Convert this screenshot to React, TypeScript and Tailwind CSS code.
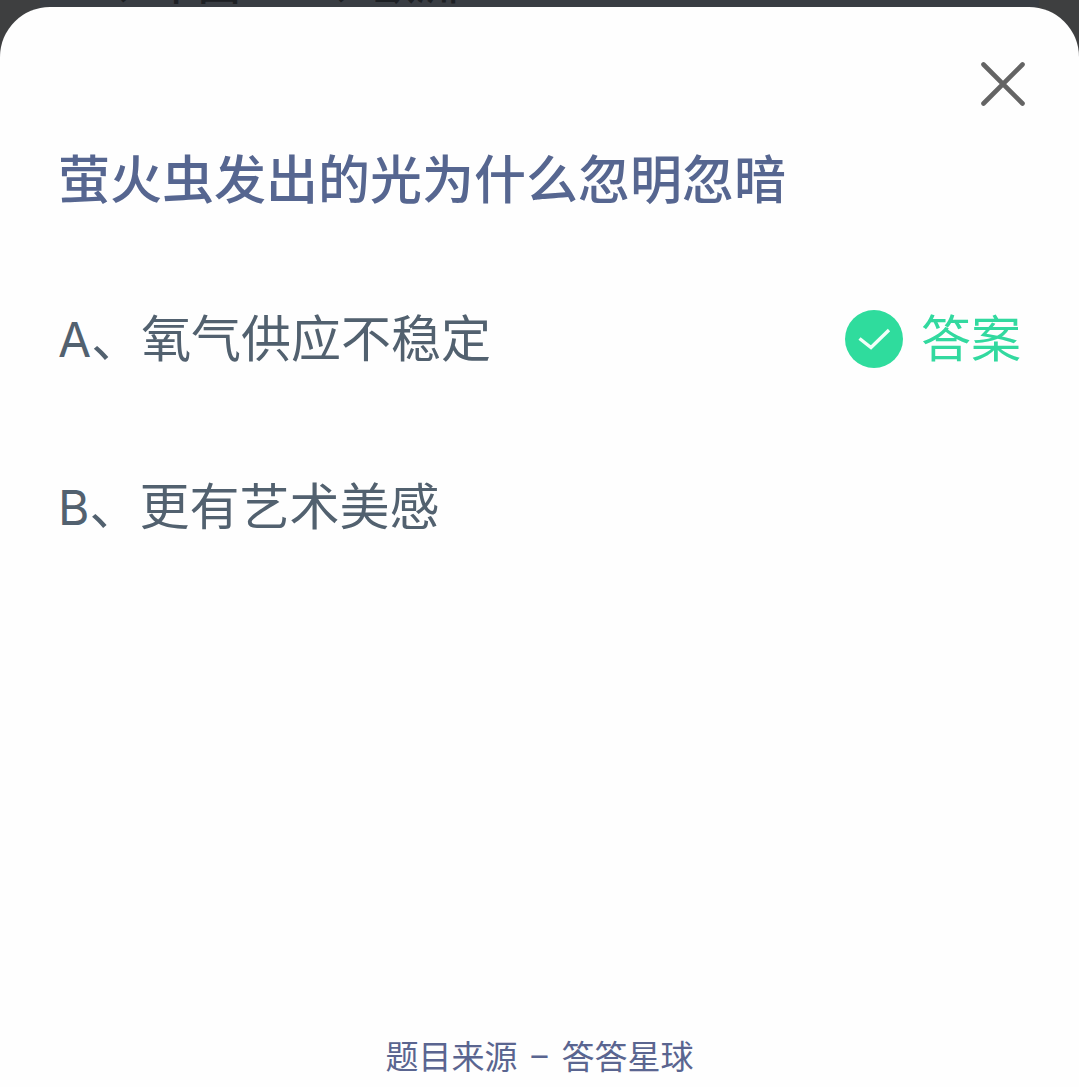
interface Option {
  label: string;
  text: string;
  correct?: boolean;
}

const options: Option[] = [
  { label: "A", text: "氧气供应不稳定", correct: true },
  { label: "B", text: "更有艺术美感" },
];

function CloseButton() {
  return (
    <button type="button" aria-label="关闭" className="block cursor-pointer">
      <svg className="h-11 w-11" viewBox="0 0 44 44" fill="none" stroke="#646464" strokeWidth="4.600" strokeLinecap="round">
        <path d="M2.500 2.500L41.500 41.500M41.500 2.500L2.500 41.500" />
      </svg>
    </button>
  );
}

function AnswerMark() {
  return (
    <div className="flex items-center gap-[18px] text-[#32d99f]">
      <svg className="mt-2 h-[58px] w-[58px]" viewBox="0 0 58 58" fill="none">
        <circle cx="29" cy="29" r="29" fill="#2fdc9d" />
        <path d="M14.500 28.500L26 37.500L44 20" stroke="#f2fff9" strokeWidth="3.400" />
      </svg>
      <span>答案</span>
    </div>
  );
}

export default function App() {
  return (
    <div className="relative flex min-h-screen flex-col overflow-hidden bg-[#3e3f40] pt-[7px] font-['Noto_Sans_CJK_SC',sans-serif]">
      {/* dimmed page behind the sheet */}
      <div className="absolute inset-x-10 top-0 h-14 bg-[#393d43]" aria-hidden="true">
        <div className="absolute bottom-full left-[45px] -mb-[11px] flex gap-[60px] text-[43px] leading-[60px] font-medium whitespace-nowrap text-[#1d2024]">
          <span>A、中国</span>
          <span>B、欧洲</span>
        </div>
      </div>

      <main className="relative flex flex-1 flex-col rounded-t-[50px] bg-[#fefefe] px-[58px] pt-[55px] pb-2">
        <div className="-mr-1 flex justify-end">
          <CloseButton />
        </div>

        <h1 className="mt-[33px] text-[52px] leading-[76px] font-medium text-[#566690]">
          萤火虫发出的光为什么忽明忽暗
        </h1>

        <ul className="mt-[82px] flex flex-col gap-[92px] text-[50px] leading-[76px] text-[#52616f]">
          {options.map((option) => (
            <li key={option.label} className="flex items-center justify-between">
              <span>
                <span className="font-['Inter',sans-serif] text-[48px] leading-none">{option.label}</span>、{option.text}
              </span>
              {option.correct && <AnswerMark />}
            </li>
          ))}
        </ul>

        <footer className="mt-auto text-center text-[33px] leading-[48px] text-[#5a6590]">
          题目来源
          <span className="mx-[3px] font-['Roboto',sans-serif] leading-none"> – </span>
          答答星球
        </footer>
      </main>
    </div>
  );
}
